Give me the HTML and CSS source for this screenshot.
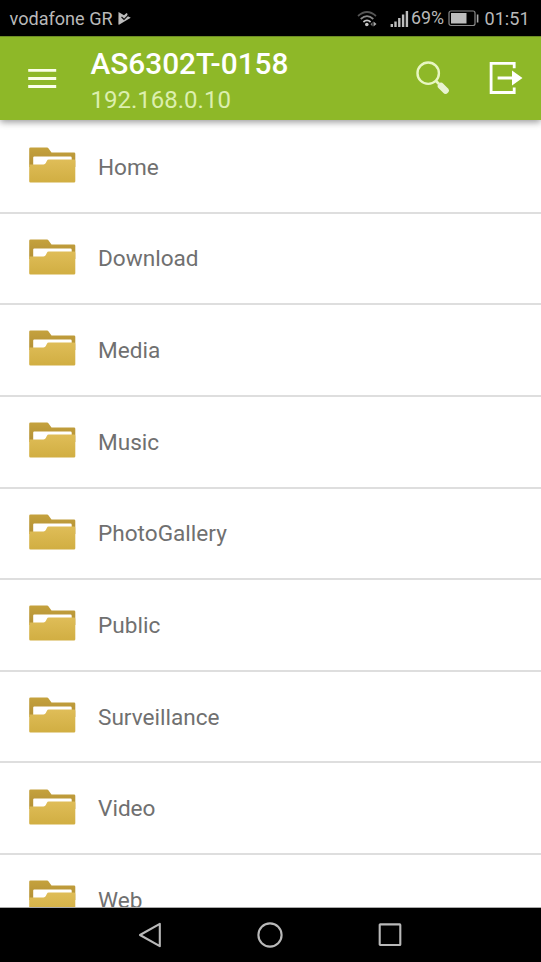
FILE: index.html
```html
<!DOCTYPE html>
<html lang="en">
<head>
<meta charset="utf-8">
<title>AS6302T-0158</title>
<link rel="stylesheet" href="styles.css">
</head>
<body>
<svg class="defs" width="0" height="0" aria-hidden="true">
  <defs>
    <linearGradient id="back" x1="0" y1="0" x2="0" y2="1"><stop offset="0" stop-color="#c5a23d"/><stop offset="1" stop-color="#b18e35"/></linearGradient>
    <linearGradient id="front" x1="0" y1="0" x2="0" y2="1"><stop offset="0" stop-color="#dfbd58"/><stop offset="1" stop-color="#d1ae42"/></linearGradient>
    <symbol id="folder" viewBox="0 0 47 36">
      <path fill="url(#back)" d="M1.5 .5H18q1 0 1.6.9L22.5 5.500H45q1.300 0 1.300 1.300V20H.2V1.800Q.2.5 1.500.5Z"/>
      <path fill="#fff" d="M5.200 9.500H41.500q1.200 0 1.200 1.200V14H19L16 19H4.200V10.500q0-1 1-1Z"/>
      <path fill="url(#front)" d="M.2 17.500H14.500q1.700 0 2.300-1.400l1-2.200q.6-1.300 2-1.300H45q1.300 0 1.300 1.300V34.200q0 1.300-1.300 1.300H1.500Q.2 35.500.2 34.200Z"/>
    </symbol>
  </defs>
</svg>
<div class="screen">
  <div class="status">
    <span class="carrier">vodafone GR</span>
    <svg class="play" width="14" height="15" viewBox="0 0 14 15"><path fill="#bdbdbd" d="M.5 1 6 4.200 8.500 2 9.700 3 9 4.800 12.800 6.800 8.500 9.200 1 13.800Q.4 14 .4 13Z"/><path d="M3.500 6 6 8.300 10.500 3.800" fill="none" stroke="#111" stroke-width="1.200"/></svg>
    <svg class="wifi" width="21" height="18" viewBox="0 0 21 18" fill="none" stroke-width="1.700"><path stroke="#555" d="M1 6Q10 -2 19 6"/><path stroke="#888" d="M3.700 9Q10 3.300 16.300 9"/><path stroke="#c5c5c5" d="M6.400 12Q10 8.800 13.600 12"/><circle cx="9.800" cy="14.500" r="1.800" fill="#c5c5c5"/><path fill="#777" d="M15.500 12v4.500l-2-2.200Z"/><path fill="#aaa" d="M16.500 11.500v5l3-2.500Z"/></svg>
    <svg class="signal" width="19" height="18" viewBox="0 0 19 18" fill="#bdbdbd"><path d="M.6 14h2.400v3H.6ZM4.300 11.500h2.400V17H4.300ZM8.100 8h2.400v9H8.100ZM11.900 4.500h2.400V17h-2.400ZM15.700 1h2.400v16h-2.400Z"/></svg>
    <span class="percent">69%</span>
    <svg class="battery" width="32" height="17" viewBox="0 0 32 17"><rect x="1" y="1" width="26" height="14.500" rx="2" fill="none" stroke="#8a8a8a" stroke-width="1.200"/><path fill="#bdbdbd" d="M3 3H18.500V13.500H3Z"/><path fill="#aaa" d="M28.800 4.500h1.600v8h-1.600Z"/></svg>
    <span class="clock">01:51</span>
  </div>
  <header class="bar">
    <svg class="menu" width="29" height="22" viewBox="0 0 29 22" fill="#fbffe9"><path d="M.2 1h28v2.800H.2ZM.2 9.100h28v2.800H.2ZM.2 17.100h28v2.800H.2Z"/></svg>
    <div class="titles">
      <h1>AS6302T-0158</h1>
      <p>192.168.0.10</p>
    </div>
    <svg class="search" width="34" height="34" viewBox="0 0 34 34"><circle cx="12.200" cy="12.200" r="10.700" fill="none" stroke="#e8f6c2" stroke-width="2.400"/><path stroke="#e8f6c2" stroke-width="2.600" d="M19.500 19.500 23 23"/><path stroke="#e9f3d2" stroke-width="6.600" stroke-linecap="round" d="M25 25 29.500 29.500"/></svg>
    <svg class="exit" width="34" height="34" viewBox="0 0 34 34"><path fill="none" stroke="#fff" stroke-width="2.800" d="M25.200 7.200V2.300H2.100V31.500H25.200V26.600"/><path fill="#fff" d="M8.600 15.500H23V9.500L33.500 17 23 24.500V18.500H8.600Z"/></svg>
  </header>
  <ul class="list">
    <li><svg class="folder"><use href="#folder"/></svg><span>Home</span></li>
    <li><svg class="folder"><use href="#folder"/></svg><span>Download</span></li>
    <li><svg class="folder"><use href="#folder"/></svg><span>Media</span></li>
    <li><svg class="folder"><use href="#folder"/></svg><span>Music</span></li>
    <li><svg class="folder"><use href="#folder"/></svg><span>PhotoGallery</span></li>
    <li><svg class="folder"><use href="#folder"/></svg><span>Public</span></li>
    <li><svg class="folder"><use href="#folder"/></svg><span>Surveillance</span></li>
    <li><svg class="folder"><use href="#folder"/></svg><span>Video</span></li>
    <li><svg class="folder"><use href="#folder"/></svg><span>Web</span></li>
  </ul>
  <nav class="nav">
    <svg width="26" height="28" viewBox="0 0 26 28"><path d="M22.800 2.800V25.200L3 14Z"/></svg>
    <svg width="26" height="28" viewBox="0 0 26 28"><circle cx="13" cy="14" r="11.600"/></svg>
    <svg width="26" height="28" viewBox="0 0 26 28"><rect x="2.700" y="3.400" width="20.600" height="20.600" rx=".5"/></svg>
  </nav>
</div>
</body>
</html>
```

FILE: styles.css
```css
* { box-sizing: border-box; }
body { margin: 0; font-family: Roboto, "Liberation Sans", sans-serif; background: #fff; }
h1, p, ul { margin: 0; padding: 0; }
svg { display: block; flex: none; }
.defs { position: absolute; }
.screen { display: flex; flex-direction: column; width: 541px; height: 962px; overflow: hidden; }

.status { flex: none; display: flex; align-items: center; height: 36px; padding: 1px 0 0 9.5px; background: #000; color: #b9b9b9; font-size: 18.1px; line-height: 36px; white-space: nowrap; }
.carrier { width: 108.5px; }
.wifi { margin-left: 225px; }
.signal { margin-left: 12px; }
.percent { width: 38px; margin: -2px 0 0 2px; font-size: 17.8px; }
.battery { margin-left: -1px; }
.clock { margin-left: 4.500px; }

.bar { position: relative; z-index: 1; flex: none; display: flex; align-items: center; height: 84px; padding: 0 18px 0 28px; background: #8eb828; border-top: 1px solid #6d8d25; box-shadow: 0 2px 7px rgba(0, 0, 0, .42); }
.titles { flex: 1; margin: 5px 0 0 33.5px; white-space: nowrap; }
.titles h1 { color: #fff; font-size: 29.8px; font-weight: 500; line-height: 38px; }
.titles p { color: #dcefae; font-size: 24px; line-height: 34px; }
.search { margin: -1px 39px 0 0; }
.exit { margin-top: -1px; }

.list { flex: 1; min-height: 0; overflow: hidden; list-style: none; padding-top: 2px; border-bottom: 1px solid #aaa; }
.list li { display: flex; align-items: center; height: 91.65px; padding-left: 29px; border-bottom: 2px solid #dedede; color: #707070; font-size: 22.6px; line-height: 30px; }
.list span { margin-top: 2px; }
.folder { width: 47px; height: 36px; margin: -3.500px 22px 0 0; }

.nav { flex: none; display: flex; justify-content: center; align-items: center; gap: 94px; height: 54px; padding-right: 1px; background: #000; }
.nav path, .nav circle, .nav rect { fill: none; stroke: #b9b9b9; stroke-width: 2.1; stroke-linejoin: round; }
```
